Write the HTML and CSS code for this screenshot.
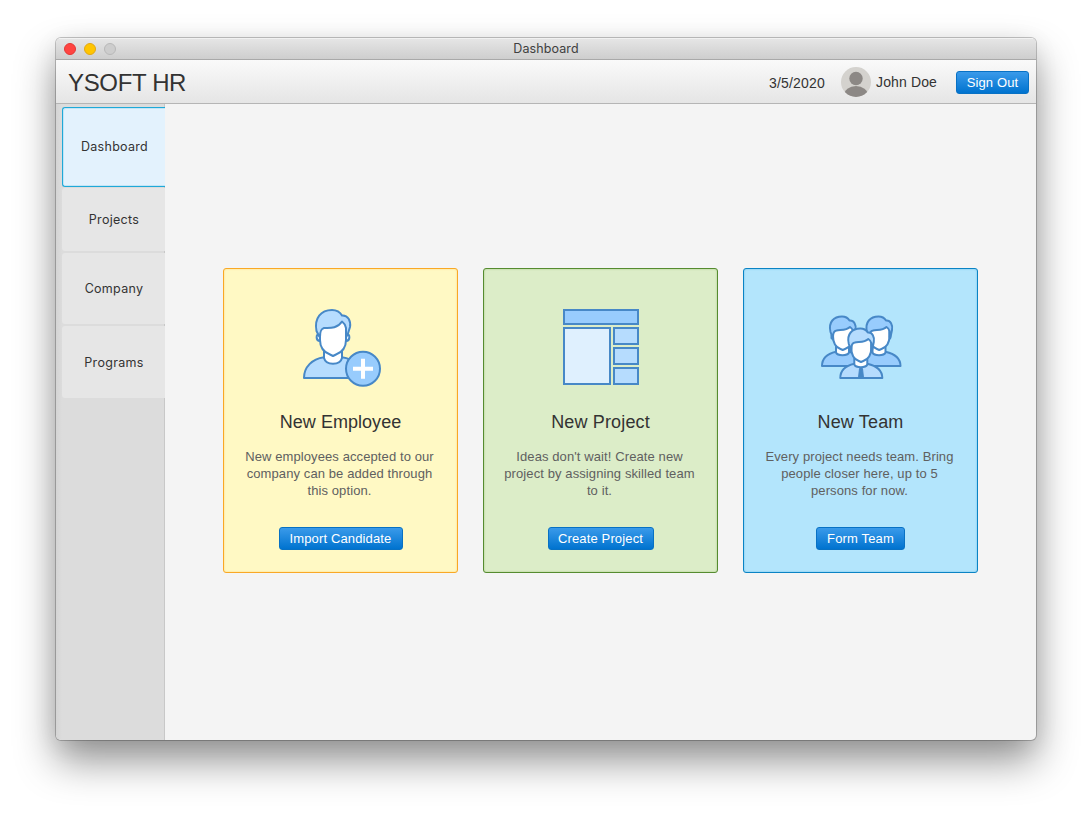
FILE: index.html
```html
<!DOCTYPE html>
<html lang="en">
<head>
<meta charset="utf-8">
<title>Dashboard</title>
<link rel="stylesheet" href="styles.css">
</head>
<body>
<div class="window">
  <div class="titlebar">
    <div class="lights"><i class="light close"></i><i class="light minimize"></i><i class="light disabled"></i></div>
    <span class="window-title">Dashboard</span>
  </div>
  <header class="header">
    <h1 class="brand">YSOFT HR</h1>
    <span class="date">3/5/2020</span>
    <svg class="avatar" viewBox="0 0 30 30"><defs><clipPath id="round"><circle cx="15" cy="15" r="15"/></clipPath></defs><g clip-path="url(#round)"><rect width="30" height="30" fill="#d4d2ce"/><circle cx="15" cy="11.5" r="6.7" fill="#8c8885"/><ellipse cx="15" cy="28" rx="12" ry="9" fill="#8c8885"/></g></svg>
    <span class="user">John Doe</span>
    <button class="button sign-out">Sign Out</button>
  </header>
  <div class="body">
    <nav class="sidebar">
      <a class="tab active">Dashboard</a>
      <a class="tab projects">Projects</a>
      <a class="tab company">Company</a>
      <a class="tab programs">Programs</a>
    </nav>
    <main class="content">
      <section class="card yellow">
        <svg class="icon" viewBox="0 0 82 82" fill="#b6dcfe" stroke="#4788c7" stroke-width="2" stroke-linejoin="round">
          <path d="M4 71C4 60 12 52 24 50.3H42C54 52 62 60 62 71Z"/>
          <path d="M24 43V51C25 55 29 56.7 33 56.7S41 55 42 51V43" fill="#fff"/>
          <path d="M20 27C15.500 26.500 15.500 33.500 20 34M46 27C50.500 26.500 50.500 33.500 46 34" fill="#dff0fe"/>
          <path d="M20 18C25 10 42 8 46 18V33C46 43 40 46 36 47.500L33 49L30 47.500C26 46 20 43 20 33Z" fill="#fff"/>
          <path d="M19 29L16.500 24C14 11 21 3 32 3C37 3 40 5 42 8.500C48 8 51 14 50 20L47.500 28L46 30V21C45.500 18 44 16 42 14.500C37 22 30 21 24 21C21 22 20 24 20 30Z"/>
          <circle cx="63" cy="61.700" r="17" fill="#98ccfd"/>
          <path d="M63 51.700V71.700M53 61.700H73" stroke="#fff" stroke-width="4"/>
        </svg>
        <h2 class="card-title">New Employee</h2>
        <p class="card-text">New employees accepted to our<br>company can be added through<br>this option.</p>
        <button class="button import">Import Candidate</button>
      </section>
      <section class="card green">
        <svg class="icon" viewBox="0 0 82 82" stroke="#4788c7" stroke-width="2">
          <rect x="4" y="3" width="74" height="14" fill="#98ccfd"/>
          <rect x="4" y="21" width="46" height="56" fill="#dff0fe"/>
          <g fill="#b6dcfe"><rect x="54" y="21" width="24" height="16"/><rect x="54" y="41" width="24" height="16"/><rect x="54" y="61" width="24" height="16"/></g>
        </svg>
        <h2 class="card-title">New Project</h2>
        <p class="card-text">Ideas don't wait! Create new<br>project by assigning skilled team<br>to it.</p>
        <button class="button create">Create Project</button>
      </section>
      <section class="card blue">
        <svg class="icon team" viewBox="0 0 86 82" stroke="#4788c7" stroke-width="2" stroke-linejoin="round">
          <defs>
            <g id="person">
              <path d="M4 59C4 50 10 46.500 18 44.700H31C39 46.500 46 50 46 59Z"/>
              <path d="M18 39V45.500C19.500 49 29.500 49 31 45.500V39" fill="#fff"/>
              <path d="M13.500 27.500V31L15.500 33M35.800 27.500V31L34 33"/>
              <path d="M15 20C20 15 30 13 35 19V29C35 37 31 40.500 27 42L24.700 43L22.500 42C18.500 40.500 15 37 15 29Z" fill="#fff"/>
              <path d="M14.500 30L12.500 25C10 15 16 9.500 24 9.500C28 9.500 30 11 31.500 13.500C36 13 38.500 18 37.500 23L36 30H35V24C34.500 22 33.500 21 32 20C28 24 22 22.500 18.500 23.500C15.500 24 15 26 15 30Z"/>
            </g>
          </defs>
          <use href="#person" fill="#98ccfd"/>
          <use href="#person" x="36.500" fill="#98ccfd"/>
          <use href="#person" x="18.300" y="12" fill="#b6dcfe"/>
          <path d="M41.500 61.500H44.500L45.500 71H40.500Z" fill="#4788c7" stroke-width="1"/>
        </svg>
        <h2 class="card-title">New Team</h2>
        <p class="card-text">Every project needs team. Bring<br>people closer here, up to 5<br>persons for now.</p>
        <button class="button form">Form Team</button>
      </section>
    </main>
  </div>
</div>
</body>
</html>
```
FILE: styles.css
```css
* { box-sizing: border-box; }
body {
  margin: 0;
  height: 814px;
  padding: 38px 56px 0;
  overflow: hidden;
  background: #fff;
  font-family: "Liberation Sans", Arial, sans-serif;
  font-size: 13px;
  color: #333;
}
.window {
  display: flex;
  flex-direction: column;
  width: 980px;
  height: 702px;
  border-radius: 5px;
  overflow: hidden;
  background: #f4f4f4;
  box-shadow: 0 0 0 1px rgba(0,0,0,.22), 0 21px 40px rgba(0,0,0,.42), 0 5px 24px rgba(0,0,0,.08);
}
.titlebar {
  position: relative;
  display: flex;
  align-items: center;
  justify-content: center;
  height: 22px;
  flex: none;
  background: linear-gradient(#e5e5e5, #cecece);
  border-top: 1px solid #f2f2f2;
  border-bottom: 1px solid #a9a9a9;
}
.lights { position: absolute; left: 8px; top: 4px; display: flex; gap: 8px; }
.light { width: 12px; height: 12px; border-radius: 50%; border: 1px solid; }
.close { background: #ff4441; border-color: #e33734; }
.minimize { background: #ffc500; border-color: #e2a713; }
.disabled { background: #cdcdcd; border-color: #b8b8b8; }
.window-title { font-family: Inter, sans-serif; font-size: 12.5px; letter-spacing: .1px; line-height: 20px; color: #404040; }
.header {
  display: flex;
  align-items: center;
  height: 44px;
  flex: none;
  padding: 0 7px 0 12px;
  background: linear-gradient(#fafafa, #e5e5e5);
  border-bottom: 1px solid #b5b5b5;
}
.brand { margin: 0 auto 0 0; font-size: 24px; font-weight: 400; line-height: 30px; padding-top: 2px; letter-spacing: -.35px; }
.date { font-size: 14px; padding-top: 2px; margin-right: 16px; letter-spacing: .2px; }
.avatar { width: 30px; height: 30px; margin-right: 5px; }
.user { font-size: 14px; margin-right: 19px; letter-spacing: .13px; }
.button {
  height: 23px;
  padding: 0;
  border: 1px solid #0871c4;
  border-radius: 3px;
  background: linear-gradient(#3a9aea, #0073cf);
  color: #fff;
  font: 13px/21px "Liberation Sans", Arial, sans-serif;
  letter-spacing: .14px;
  white-space: nowrap;
}
.sign-out { width: 73px; margin-top: 1px; }
.body { display: flex; flex: 1; }
.sidebar {
  display: flex;
  flex-direction: column;
  width: 109px;
  padding: 3px 0 0 6px;
  background: linear-gradient(90deg, #d4d4d4, #dcdcdc 6px);
  box-shadow: inset -1px 0 #c8c8c8;
}
.tab {
  display: flex;
  align-items: center;
  justify-content: center;
  margin-bottom: 2px;
  padding: 0 0 1px 1px;
  background: #e6e6e6;
  border-radius: 3px 0 0 3px;
  font-family: Inter, sans-serif;
  font-size: 12.5px;
  letter-spacing: .3px;
}
.active {
  height: 80px;
  margin-bottom: 1px;
  background: #e3f2fd;
  border: 1px solid #1fa9d8;
  border-right: 0;
  box-shadow: inset 1px 1px #c3e5f6, inset 0 -1px #c3e5f6;
}
.projects { height: 63px; }
.company { height: 71px; }
.programs { height: 72px; padding-bottom: 0; }
.content { display: flex; flex: 1; gap: 25px; padding: 164px 0 0 58px; align-items: flex-start; }
.card {
  display: flex;
  flex-direction: column;
  align-items: center;
  width: 235px;
  height: 305px;
  padding-top: 38px;
  border: 1px solid;
  border-radius: 3px;
}
.yellow { background: #fff9c4; border-color: #f9a825; box-shadow: inset 0 0 2px #ffd27a; }
.green { background: #dcedc8; border-color: #558b2f; box-shadow: inset 0 0 2px #9fc57f; }
.blue { background: #b3e5fc; border-color: #0a83c4; box-shadow: inset 0 0 2px #65bce7; }
.icon { width: 82px; height: 82px; flex: none; }
.team { width: 86px; }
.card-title { margin: 22px 0 0; font-size: 18px; font-weight: 400; line-height: 22px; letter-spacing: .04px; }
.green .card-title, .blue .card-title { letter-spacing: .15px; }
.card-text { margin: 15px 0 0; padding-right: 2px; line-height: 17px; letter-spacing: .1px; color: #606060; text-align: center; white-space: nowrap; }
.card .button { margin-top: 28px; }
.import { width: 124px; }
.create { width: 106px; }
.form { width: 89px; }
```
